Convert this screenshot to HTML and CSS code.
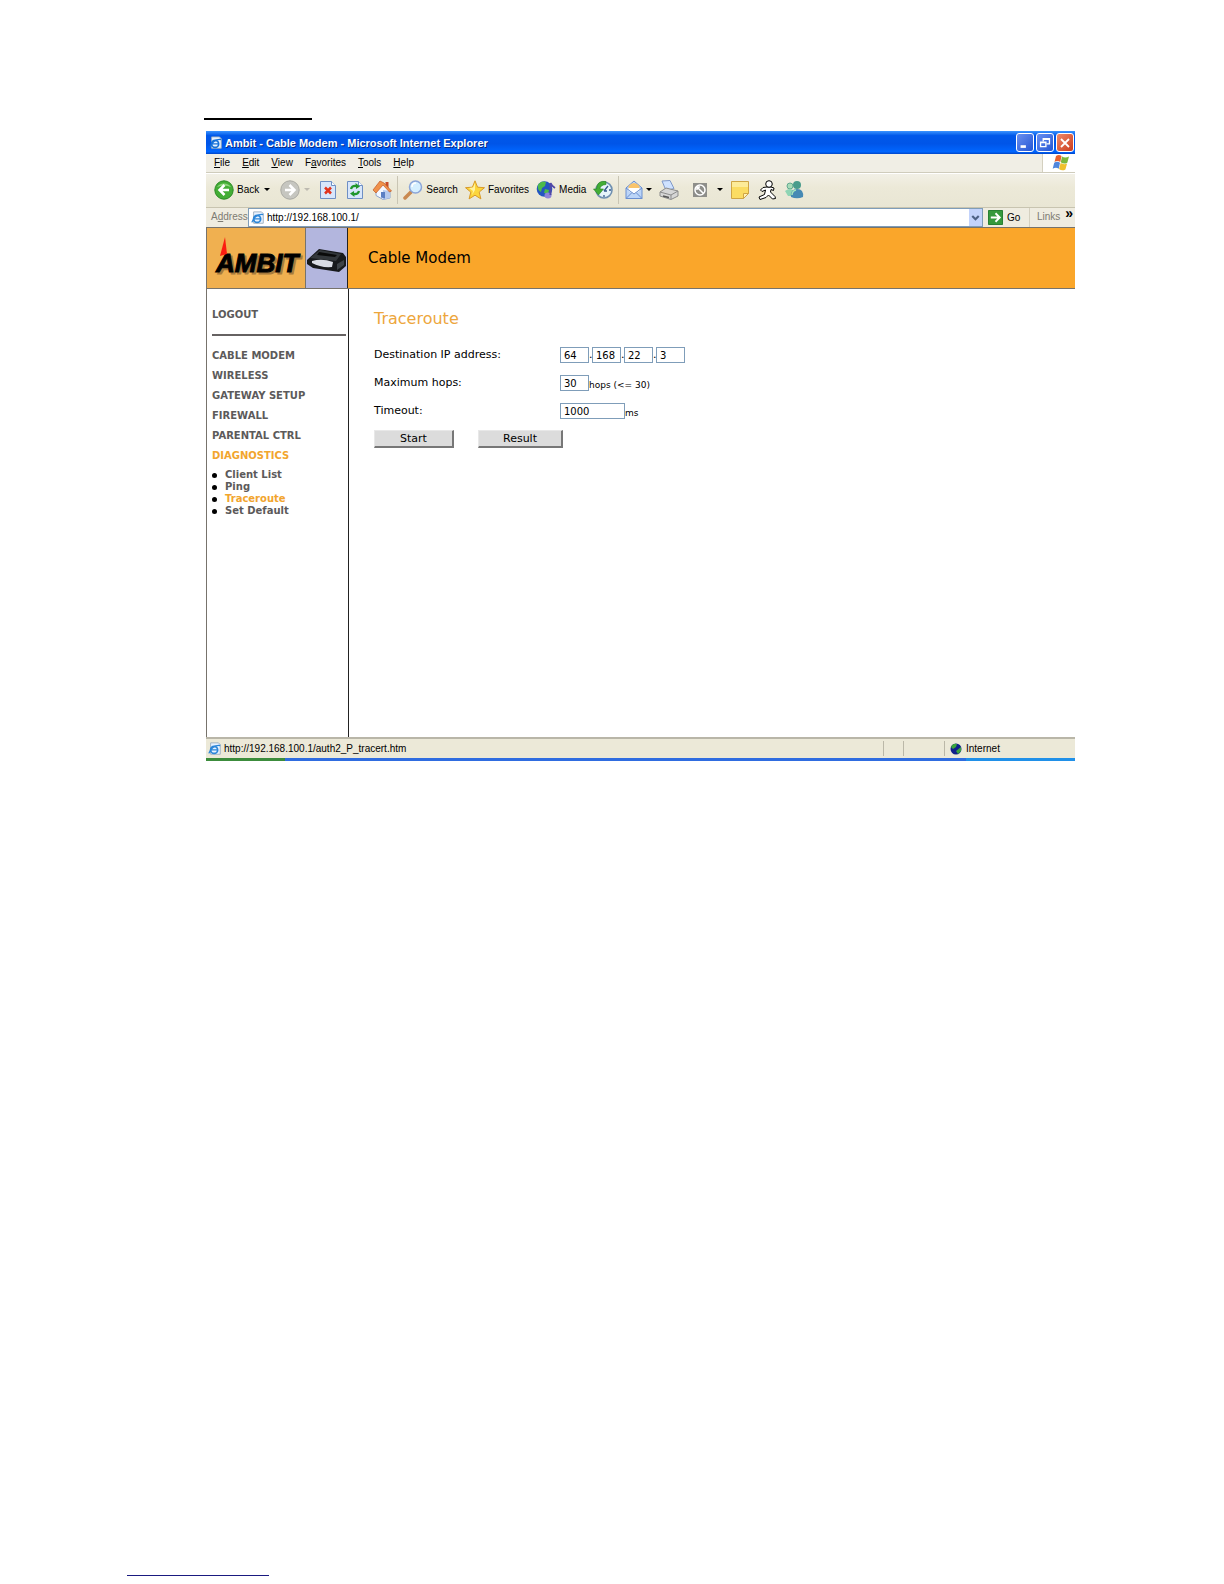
FILE: index.html
```
<!DOCTYPE html>
<html lang="en">
<head>
<meta charset="utf-8">
<title>Ambit - Cable Modem</title>
<link rel="stylesheet" href="styles.css">
</head>
<body>
<div class="sheet">
  <div class="heading-rule"></div>
  <div class="window">
    <header class="titlebar">
      <svg class="ico16" viewBox="0 0 16 16" aria-hidden="true"><path d="M3 1h9l2 2v11H3z" fill="#e8f2ff" stroke="#9ab"/><circle cx="7" cy="9" r="4" fill="none" stroke="#1670d8" stroke-width="2"/><path d="M3 9h8M1 13C3 7 8 3 14 4" fill="none" stroke="#1670d8" stroke-width="1.5"/></svg>
      <span class="caption">Ambit - Cable Modem - Microsoft Internet Explorer</span>
      <div class="controls">
        <button class="ctl" aria-label="Minimize"><svg viewBox="0 0 18 18"><path d="M4 13h6" stroke="#fff" stroke-width="3"/></svg></button>
        <button class="ctl" aria-label="Restore"><svg viewBox="0 0 18 18"><path d="M7 7V4h7v6h-3M7 5h7M4 8h6v5H4zM4 8.500h6" fill="none" stroke="#fff" stroke-width="1.500"/></svg></button>
        <button class="ctl ctl-close" aria-label="Close"><svg viewBox="0 0 18 18"><path d="M4.500 4.500l9 9M13.500 4.500l-9 9" stroke="#fff" stroke-width="2"/></svg></button>
      </div>
    </header>

    <nav class="menubar">
      <button><u>F</u>ile</button>
      <button><u>E</u>dit</button>
      <button><u>V</u>iew</button>
      <button>F<u>a</u>vorites</button>
      <button><u>T</u>ools</button>
      <button><u>H</u>elp</button>
      <div class="flag"><svg viewBox="0 0 18 16" aria-hidden="true"><path d="M4 1.500q3-2 5.500 0l-1.200 6q-3-2-5.800 0z" fill="#e8602c"/><path d="M10 2q3 2 7 0l-1.700 6.200q-3.500 2-6.500-.5z" fill="#7db83a"/><path d="M2.200 8.300q3-2 5.800 0l-1.200 6q-3-2-6.100 0z" fill="#4f86dc"/><path d="M8.600 8.600q3.500 2 6.500.3l-1.700 6q-3.500 2-6.300-.5z" fill="#f0c02c"/></svg></div>
    </nav>

    <div class="toolbar">
      <button class="tool tool-back"><svg class="ico20" viewBox="0 0 20 20"><circle cx="10" cy="10" r="9.200" fill="#43ad35" stroke="#2a8a24"/><path d="M3 7a8 7 0 0 1 14 0q-7-3-14 0" fill="#8fd67c"/><path d="M10.500 5L5.500 10l5 5M6 10h9" fill="none" stroke="#fff" stroke-width="2.500"/></svg><span>Back</span><i class="caret"></i></button>
      <button class="tool tool-forward" disabled aria-label="Forward"><svg class="ico20" viewBox="0 0 20 20"><circle cx="10" cy="10" r="9.200" fill="#c6c6c0" stroke="#a9a9a2"/><path d="M9.500 5l5 5-5 5M14 10H5" fill="none" stroke="#fff" stroke-width="2.500"/></svg><i class="caret caret-off"></i></button>
      <button class="tool" aria-label="Stop"><svg class="ico20" viewBox="0 0 20 20"><path d="M2.500 1.500h11l4 4v13h-15z" fill="#d8e6fb" stroke="#6f8fc4"/><path d="M13.500 1.500v4h4" fill="#fff" stroke="#6f8fc4"/><path d="M7 7.500l6 6M13 7.500l-6 6" stroke="#e2321c" stroke-width="2.500"/></svg></button>
      <button class="tool" aria-label="Refresh"><svg class="ico20" viewBox="0 0 20 20"><path d="M2.500 1.500h11l4 4v13h-15z" fill="#d8e6fb" stroke="#6f8fc4"/><path d="M13.500 1.500v4h4" fill="#fff" stroke="#6f8fc4"/><path d="M6 9q1-4 6-3M14 11q-1 4-6 3" fill="none" stroke="#20962c" stroke-width="2.200"/><path d="M10.500 3l4.500 3.500-4 2.500zM9.500 17L5 13.500 9 11z" fill="#20962c"/></svg></button>
      <button class="tool" aria-label="Home"><svg class="ico20" viewBox="0 0 20 20"><path d="M13.500 2h3v6h-3z" fill="#c84a28"/><path d="M4 10l7-6 7 7v7l-7 1.500-7-4z" fill="#f4f7ff" stroke="#8ba3cc"/><path d="M11 10l7 1v7l-7 1.500z" fill="#b5c9ee"/><path d="M1 10L8 1l4 2 7.500 8-2 1L11 5l-7 8z" fill="#f0914a" stroke="#c05a2a" stroke-width=".7"/><path d="M9 12h4v6.500l-4-1z" fill="#5a7fc4"/></svg></button>
      <div class="sep"></div>
      <button class="tool tool-text"><svg class="ico20" viewBox="0 0 20 20"><path d="M8 12l-6 6" stroke="#c98950" stroke-width="3.500" stroke-linecap="round"/><circle cx="12.500" cy="7" r="6" fill="#d5efff" stroke="#8ba5d8" stroke-width="1.500"/><path d="M9 7q0-4 4-4" fill="none" stroke="#fff" stroke-width="1.500"/></svg><span>Search</span></button>
      <button class="tool tool-text"><svg class="ico20" viewBox="0 0 20 20"><path d="M10 .8l2.600 6.400 6.900.5-5.300 4.400 1.700 6.800-5.900-3.700-5.900 3.700 1.700-6.800L.5 7.700l6.900-.5z" fill="#fcd63c" stroke="#d89a2a"/><path d="M10 3v7l-3 5 1-4-4-3 4-.500z" fill="#fff3a0"/></svg><span>Favorites</span></button>
      <button class="tool tool-text"><svg class="ico20" viewBox="0 0 20 20"><circle cx="8.500" cy="9" r="7.800" fill="#2456c0"/><path d="M2 5q3-5 8-3l-1 4-3 2-1 4Q1 10 2 5M9 9l4 1-1 4-4-1z" fill="#4dbb4a"/><ellipse cx="12" cy="15.500" rx="3.500" ry="3" fill="#8e84d8"/><path d="M14.500 15V3q1 3 4.500 5" fill="none" stroke="#5048a8" stroke-width="2"/></svg><span>Media</span></button>
      <button class="tool" aria-label="History"><svg class="ico20" viewBox="0 0 20 20"><circle cx="11" cy="10" r="8" fill="#e6f3fa" stroke="#6f8fb0" stroke-width="1.600"/><path d="M11 11l4-5M11 11h3M18 10h-2M11 17v-2" stroke="#345a8c" stroke-width="1.300"/><path d="M13 1.500Q4 0 3.500 9H.5l5 6 5-6H7q0-4 6-4.500z" fill="#43ad35" stroke="#238324" stroke-width=".6"/></svg></button>
      <div class="sep"></div>
      <button class="tool tool-mail" aria-label="Mail"><svg class="ico20" viewBox="0 0 20 20"><path d="M2 8l8-7 8 7v10.500H2z" fill="#bcd5f8" stroke="#6a8fd0"/><path d="M4.500 6q5.500-6 11 0v4l-5.500 4-5.500-4z" fill="#f9c46c"/><path d="M4.500 8h11v3l-5.500 3-5.500-3z" fill="#fff"/><path d="M2 8l8 6 8-6M2 18.500l6-6M18 18.500l-6-6" fill="none" stroke="#6a8fd0"/></svg><i class="caret"></i></button>
      <button class="tool tool-print" aria-label="Print"><svg class="ico20" viewBox="0 0 20 20"><path d="M3 1l8-.5 4 8-8 2z" fill="#cfe2ff" stroke="#8099c8"/><path d="M1 12l6-4 12 3v5l-7 3.500L1 16z" fill="#d6d6d6" stroke="#8b8b8b"/><path d="M1 12l11 3 7-4M12 15v4" fill="none" stroke="#8b8b8b"/><path d="M4 16l6 1.500" stroke="#555" stroke-width="1.500"/></svg></button>
      <button class="tool tool-edit" aria-label="Edit"><svg class="ico20" viewBox="0 0 20 20"><path d="M3 3h14v14H3z" fill="#8e8e8a"/><circle cx="10" cy="10" r="5" fill="none" stroke="#fff" stroke-width="1.500"/><path d="M6.500 6.500l7 7M7 10V7h3" fill="none" stroke="#fff" stroke-width="1.500"/></svg><i class="caret"></i></button>
      <button class="tool" aria-label="Discuss"><svg class="ico20" viewBox="0 0 20 20"><path d="M1.500 1.500h17v12l-5 5h-12z" fill="#fbdc62" stroke="#cfa544"/><path d="M2 2h16v5H2z" fill="#fdeb98"/><path d="M18.500 13.500h-5v5z" fill="#fff2b8" stroke="#cfa544"/></svg></button>
      <button class="tool" aria-label="Messenger"><svg class="ico20" viewBox="0 0 20 20"><path d="M10 7L6 7.500 3.500 10l1.500 1.500L8.500 10 7.500 14.500 2 17l1 2.500 6-2 2.500-2.500 4 4 3-.5-.5-2-4.500-4.500.5-2.500 2.500 1 .5-2.500L14 7z" fill="#fff" stroke="#000"/><circle cx="12" cy="4" r="3.300" fill="#fff" stroke="#000"/></svg></button>
      <button class="tool" aria-label="Windows Messenger"><svg class="ico20" viewBox="0 0 20 20"><circle cx="6" cy="6" r="3" fill="#a8dcb8" stroke="#62a890"/><path d="M1 11q5-4 9 0v5H4z" fill="#8fd4b4"/><circle cx="13" cy="5" r="4" fill="#4a9c8c"/><path d="M7 17q-1-8 6-8t6 8q-6 2.500-12 0" fill="#4689b4"/><path d="M8 15q0-4 4-5" fill="none" stroke="#a4e4bc" stroke-width="1.500"/></svg></button>
    </div>

    <form class="address">
      <label for="url">A<u>d</u>dress</label>
      <div class="combo">
        <svg class="ico16" viewBox="0 0 16 16" aria-hidden="true"><path d="M3 1h9l2 2v11H3z" fill="#e8f2ff" stroke="#9ab"/><circle cx="7" cy="9" r="4" fill="none" stroke="#2c86d8" stroke-width="2"/><path d="M3 9h8M1 13C3 7 8 3 14 4" fill="none" stroke="#2c86d8" stroke-width="1.500"/></svg>
        <input id="url" type="text" value="http://192.168.100.1/">
        <button type="button" class="drop" aria-label="Show addresses"><svg viewBox="0 0 12 14"><path d="M3 5.500l3 3 3-3" fill="none" stroke="#4d6185" stroke-width="2"/></svg></button>
      </div>
      <button type="button" class="go"><svg viewBox="0 0 16 16"><path d="M.5.500h15v15H.5z" fill="#36993c" stroke="#1f7a2c"/><path d="M8 3.500L12.500 8 8 12.500M12 8H3" fill="none" stroke="#fff" stroke-width="2"/></svg><span>Go</span></button>
      <div class="links"><span>Links</span><b>»</b></div>
    </form>

    <div class="banner">
      <div class="logo">
        <svg viewBox="0 0 98 60" role="img" aria-label="AMBIT">
          <text class="logo-shadow" x="11" y="46">AMBIT</text>
          <text class="logo-text" x="9" y="44">AMBIT</text>
          <path d="M18 9l2 17-7 2z" fill="#fb1c10"/>
        </svg>
      </div>
      <div class="device">
        <svg viewBox="0 0 41 60" aria-hidden="true"><path d="M1 32l12-11 24 4 3 4v9l-7 6-26-4-6-4z" fill="#17191c"/><path d="M4 30l10-8 21 4-5 7z" fill="#33373b"/><path d="M13 24l18 3-2 2-18-2z" fill="#0a0a0a"/><path d="M6 33q10-3 21 1l-1 5q-11 1-20-4z" fill="#d9dce4"/><path d="M31 36l7-4v5l-7 5z" fill="#3d4247"/></svg>
      </div>
      <h1>Cable Modem</h1>
    </div>

    <div class="content">
      <nav class="side">
        <a class="logout" href="#">LOGOUT</a>
        <hr>
        <ul class="main-links">
          <li><a href="#">CABLE MODEM</a></li>
          <li><a href="#">WIRELESS</a></li>
          <li><a href="#">GATEWAY SETUP</a></li>
          <li><a href="#">FIREWALL</a></li>
          <li><a href="#">PARENTAL CTRL</a></li>
          <li><a class="on" href="#">DIAGNOSTICS</a></li>
        </ul>
        <ul class="sub-links">
          <li><a href="#">Client List</a></li>
          <li><a href="#">Ping</a></li>
          <li><a class="on" href="#">Traceroute</a></li>
          <li><a href="#">Set Default</a></li>
        </ul>
      </nav>
      <main>
        <h2>Traceroute</h2>
        <form>
          <div class="row">
            <label for="ip1">Destination IP address:</label>
            <div class="fields">
              <input id="ip1" type="text" value="64"><span class="dot">.</span>
              <input type="text" value="168" aria-label="Second octet"><span class="dot">.</span>
              <input type="text" value="22" aria-label="Third octet"><span class="dot">.</span>
              <input type="text" value="3" aria-label="Fourth octet">
            </div>
          </div>
          <div class="row">
            <label for="hops">Maximum hops:</label>
            <div class="fields"><input id="hops" type="text" value="30"><span class="unit">hops (&lt;= 30)</span></div>
          </div>
          <div class="row">
            <label for="timeout">Timeout:</label>
            <div class="fields"><input id="timeout" class="wide" type="text" value="1000"><span class="unit">ms</span></div>
          </div>
          <div class="actions">
            <button type="button">Start</button>
            <button type="button">Result</button>
          </div>
        </form>
      </main>
    </div>

    <footer class="status">
      <svg class="ico16" viewBox="0 0 16 16" aria-hidden="true"><path d="M3 1h9l2 2v11H3z" fill="#e8f2ff" stroke="#9ab"/><circle cx="7" cy="9" r="4" fill="none" stroke="#2c86d8" stroke-width="2"/><path d="M3 9h8M1 13C3 7 8 3 14 4" fill="none" stroke="#2c86d8" stroke-width="1.500"/></svg>
      <span class="status-text">http://192.168.100.1/auth2_P_tracert.htm</span>
      <span class="pane"></span>
      <span class="pane pane-mid"></span>
      <span class="pane pane-zone"><svg viewBox="0 0 12 12" aria-hidden="true"><circle cx="6" cy="6" r="5.500" fill="#10208c"/><path d="M1 4q2-4 6-3L6 4 3 6zM6 8l5-4v4L8 11z" fill="#3aa63c"/></svg>Internet</span>
    </footer>
    <div class="taskbar"><span class="start"></span><span class="tasks"></span><span class="tray"></span></div>
  </div>
  <div class="foot-rule"></div>
</div>
</body>
</html>
```
FILE: styles.css
```
* { box-sizing: border-box; }
body { margin: 0; background: #fff; color: #000; font-family: "DejaVu Sans", sans-serif; }
button, input { font: inherit; color: inherit; margin: 0; padding: 0; }
button { border: 0; background: none; }
svg { display: block; flex: none; }
ul { list-style: none; margin: 0; padding: 0; }
a { color: inherit; text-decoration: none; }

.sheet { min-height: 100vh; display: flex; flex-direction: column; padding: 118px 149px 8px 206px; }
.heading-rule { width: 108px; height: 2px; margin: 0 0 11px -2px; background: #000; }
.foot-rule { width: 142px; height: 1px; margin: auto 0 0 -79px; background: #1a1a80; }

.window { font-family: "Liberation Sans", sans-serif; font-size: 10px; line-height: 14px; }
.ico16 { width: 14px; height: 14px; }
.ico20 { width: 20px; height: 20px; }

.titlebar { display: flex; align-items: center; height: 23px; padding: 0 1px 0 3px; gap: 2px; color: #fff; background: linear-gradient(#3a94ff, #0058ea 20%, #0055e8 55%, #0066ff 90%, #0045c8); }
.caption { flex: 1; font-size: 11px; font-weight: bold; line-height: 16px; text-shadow: 1px 1px #0a2a80; white-space: nowrap; }
.controls { display: flex; gap: 2px; }
.ctl { width: 18px; height: 19px; border: 1px solid #fff; border-radius: 3px; background: linear-gradient(135deg, #6a90f0, #2456d4); }
.ctl-close { background: linear-gradient(135deg, #ee8a6c, #cc3c1c); }

.menubar { display: flex; align-items: stretch; height: 19px; padding-left: 8px; gap: 12px; background: #f0eee5; border-bottom: 1px solid #cfccbc; }
.flag { margin-left: auto; width: 33px; padding-left: 9px; background: #fff; border-left: 1px solid #d4d0c0; }
.flag svg { width: 18px; height: 17px; }

.toolbar { display: flex; align-items: center; height: 35px; padding: 0 0 2px 8px; gap: 7px; background: linear-gradient(#f2f0e6, #ece9d8 40%, #e9e6d4); border-top: 1px solid #fff; border-bottom: 1px solid #c8c4b0; }
.tool { display: flex; align-items: center; gap: 4px; }
.tool-back { gap: 3px; padding-right: 3px; }
.tool-back .caret { margin-left: 2px; }
.tool-forward { padding-right: 1px; }
.tool-text { gap: 3px; }
.tool-mail { gap: 2px; }
.tool-print { padding-right: 4px; }
.tool-edit { gap: 7px; }
.caret { width: 6px; border: 3px solid transparent; border-top-color: #000; border-bottom: 0; }
.caret-off { border-top-color: #bdbab0; }
.sep { width: 1px; height: 28px; margin: 0 -2px; background: #c9c5b4; }

.address { display: flex; align-items: stretch; height: 19px; padding-left: 5px; background: #efece0; }
.address label { width: 37px; line-height: 18px; color: #7d7b72; }
.combo { flex: 1; display: flex; align-items: center; padding-left: 2px; gap: 2px; background: #fff; border: 1px solid #7f9db9; }
.combo input { flex: 1; min-width: 0; border: 0; background: none; line-height: 14px; }
.drop { width: 13px; align-self: stretch; background: #c3d3fb; }
.go { display: flex; align-items: center; gap: 4px; width: 46px; padding-left: 5px; }
.go svg { width: 15px; height: 15px; }
.links { display: flex; justify-content: space-between; width: 46px; padding: 0 2px 0 7px; border-left: 1px solid #d4d0c0; color: #7d7b72; line-height: 18px; }
.links b { font-size: 14px; line-height: 10px; color: #000; }

.banner { display: flex; height: 62px; border: solid #77736c; border-width: 1px 0 1px 1px; background: #faa62a; }
.logo { width: 98px; background: #f0b050; }
.logo svg { width: 98px; height: 60px; }
.logo text { font-family: "Liberation Sans", sans-serif; font-size: 26px; font-weight: bold; font-style: italic; }
.logo-shadow { fill: #a87a3c; stroke: #a87a3c; stroke-width: 1px; }
.logo-text { fill: #000; stroke: #000; stroke-width: 1px; }
.device { width: 43px; background: #b3b6de; border: solid #77736c; border-width: 0 1px; border-right-color: #222; }
.banner h1 { margin: 0; padding-left: 20px; font: 15px/60px "DejaVu Sans", sans-serif; }

.content { display: flex; min-height: 448px; font-family: "DejaVu Sans", sans-serif; font-size: 11px; }
.side { width: 143px; padding: 19px 2px 0 5px; border-left: 1px solid #77736c; border-right: 1px solid #222; font-weight: bold; font-size: 10px; color: #5c5a5a; }
.logout { display: block; }
.side hr { height: 2px; margin: 12px 0 10px; border: 0; background: #666262; }
.main-links { line-height: 20px; }
.sub-links { padding-top: 3px; line-height: 12px; }
.sub-links li { display: flex; align-items: center; gap: 8px; }
.sub-links li::before { content: ""; width: 5px; height: 5px; border-radius: 3px; background: #000; }
.side .on { color: #f2a52e; }

main { flex: 1; padding: 20px 0 0 25px; }
main h2 { margin: 0 0 12px; font-size: 16px; line-height: 20px; font-weight: normal; color: #eda63c; }
.row { display: grid; grid-template-columns: 186px 1fr; align-items: center; height: 28px; }
.fields { display: flex; align-items: center; }
.fields input { width: 29px; height: 16px; padding-left: 3px; border: 1px solid #7f9db9; background: #fff; font-size: 10px; }
.fields .wide { width: 65px; }
.dot { width: 3px; }
.unit { padding-top: 3px; font-size: 9px; }
.actions { display: flex; gap: 24px; padding-top: 5px; }
.actions button { width: 80px; height: 18px; border: solid; border-width: 1px 2px 2px 1px; border-color: #e8e8e8 #777 #777 #e8e8e8; background: #dcdcdc; line-height: 14px; }
.actions button + button { width: 85px; }

.status { display: flex; align-items: center; height: 21px; padding-left: 2px; gap: 2px; border-top: 2px solid #b9b6a8; background: #ece9d8; }
.status-text { flex: 1; }
.pane { width: 18px; height: 15px; border-left: 1px solid #bbb8a8; }
.pane-mid { width: 39px; }
.pane-zone { display: flex; align-items: center; gap: 4px; width: 131px; padding-left: 5px; }
.pane svg { width: 12px; height: 12px; }
.taskbar { display: flex; height: 3px; }
.start { width: 79px; background: #3c8c3c; }
.tasks { flex: 1; background: #2f6ce0; }
.tray { width: 109px; background: #2090e8; }
```
